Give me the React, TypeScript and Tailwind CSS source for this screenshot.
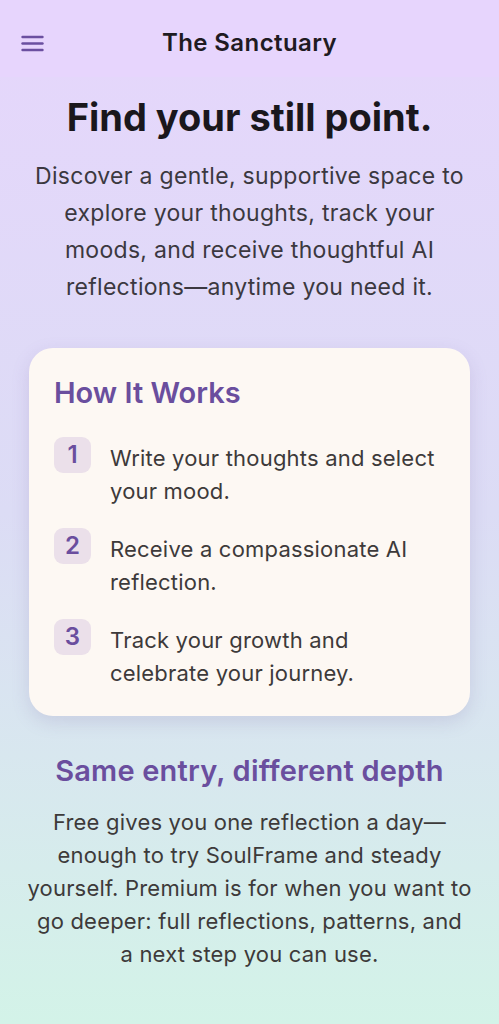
const steps = [
  "Write your thoughts and select your mood.",
  "Receive a compassionate AI reflection.",
  "Track your growth and celebrate your journey.",
];

const depthText =
  "Free gives you one reflection a day—enough to try SoulFrame and steady yourself. Premium is for when you want to go deeper: full reflections, patterns, and a\u00a0next step you can use.";

function MenuIcon() {
  return (
    <svg width="23" height="17" viewBox="0 0 23 17" fill="none" stroke="currentColor" strokeWidth="2.4" strokeLinecap="round">
      <path d="M1.5 2h20" />
      <path d="M1.5 8.5h20" />
      <path d="M1.5 15h20" />
    </svg>
  );
}

export default function App() {
  return (
    <div
      className="min-h-[1024px] w-full bg-gradient-to-b from-[#e6d6fc] via-[#dcdcf5] to-[#d3f3e8] text-[#3d3a3c]"
      style={{ fontFamily: "Inter, 'Noto Sans', sans-serif" }}
    >
      <header className="relative flex h-[77px] items-center justify-center bg-[#e7d5fd] pt-[9px]">
        <button type="button" className="absolute left-[21px] top-[35px] text-[#6b4fa0]">
          <MenuIcon />
        </button>
        <h1 className="text-[24px] font-semibold tracking-[0.4px] text-[#1f1b22]">The Sanctuary</h1>
      </header>

      <section className="px-[28px] pt-[16px] text-center">
        <h2 className="text-[38px] font-bold leading-[48px] text-[#1a171c]">Find your still point.</h2>
        <p className="mx-auto mt-[17px] text-[23px] leading-[37px] tracking-[0.3px] text-[#3b3840]">
          Discover a gentle, supportive space to explore your thoughts, track your moods, and receive
          thoughtful AI reflections—anytime you need it.
        </p>
      </section>

      <section className="mx-[29px] mt-[42px] rounded-[24px] bg-[#fdf8f3] px-[25px] pb-[26px] pt-[27px] shadow-[0_6px_18px_rgba(120,100,160,0.18)]">
        <h3 className="text-[29px] font-semibold leading-[36px] text-[#6a4e9e]">How It Works</h3>
        <ol className="mt-[26px] flex flex-col gap-[20px]">
          {steps.map((s, i) => (
            <li key={i} className="flex items-start gap-[19px]">
              <span className="flex h-[36px] w-[37px] shrink-0 items-center justify-center rounded-[9px] bg-[#ebe0ea] text-[24px] font-semibold text-[#6a4e9e]">
                {i + 1}
              </span>
              <span className="pt-[5px] text-[22px] leading-[33px] tracking-[0.2px] text-[#3d3a3a]">{s}</span>
            </li>
          ))}
        </ol>
      </section>

      <section className="px-[26px] pb-[40px] pt-[35px] text-center">
        <h3 className="text-[29px] font-semibold leading-[40px] tracking-[0.2px] text-[#6a4e9e]">
          Same entry, different depth
        </h3>
        <p className="mt-[15px] text-[22px] leading-[33px] tracking-[0.2px] text-[#3d3a3a]">{depthText}</p>
      </section>
    </div>
  );
}
